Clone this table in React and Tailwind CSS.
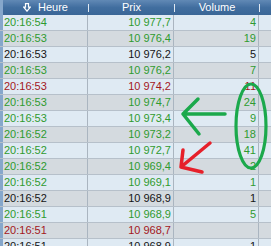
import React from 'react';

const rows = [
  { t: '20:16:54', p: '10 977,7', v: '4', c: 'g' },
  { t: '20:16:53', p: '10 976,4', v: '19', c: 'g' },
  { t: '20:16:53', p: '10 976,2', v: '5', c: 'k' },
  { t: '20:16:53', p: '10 976,2', v: '7', c: 'g' },
  { t: '20:16:53', p: '10 974,2', v: '11', c: 'r' },
  { t: '20:16:53', p: '10 974,7', v: '24', c: 'g' },
  { t: '20:16:53', p: '10 973,4', v: '9', c: 'g' },
  { t: '20:16:52', p: '10 973,2', v: '18', c: 'g' },
  { t: '20:16:52', p: '10 972,7', v: '41', c: 'g' },
  { t: '20:16:52', p: '10 969,4', v: '2', c: 'g' },
  { t: '20:16:52', p: '10 969,1', v: '1', c: 'g' },
  { t: '20:16:52', p: '10 968,9', v: '1', c: 'k' },
  { t: '20:16:51', p: '10 968,9', v: '5', c: 'g' },
  { t: '20:16:51', p: '10 968,7', v: '', c: 'r' },
  { t: '20:16:51', p: '10 968,9', v: '1', c: 'k' },
];

const colors = {
  g: 'text-[#2f9a2f]',
  r: 'text-[#a3171c]',
  k: 'text-[#151515]',
};

const Sep = () => <span className="w-px h-[8px] bg-[#dfe8f2]" />;

const App = () => {
  return (
    <div
      className="relative w-[271px] h-[246px] overflow-hidden bg-[#dde8f1] text-[11px] leading-none"
      style={{ fontFamily: '"Liberation Sans", Arial, sans-serif' }}
    >
      {/* Header */}
      <div className="flex h-[15px] bg-gradient-to-b from-[#6189b5] via-[#416e9f] to-[#3a6696] text-white">
        <div className="w-[3px] bg-[#86a7cb]" />
        <div className="w-[85px] flex items-center justify-center gap-[7px]">
          <svg width="8" height="9" viewBox="0 0 8 9" fill="none" stroke="white" strokeWidth="1.2">
            <path d="M2.5 0.6 H5.5 V4.2 H7.3 L4 8.2 L0.7 4.2 H2.5 Z" />
          </svg>
          <span>Heure</span>
        </div>
        <div className="flex items-center"><Sep /></div>
        <div className="w-[85px] flex items-center justify-center">Prix</div>
        <div className="flex items-center"><Sep /></div>
        <div className="w-[84px] flex items-center justify-center">Volume</div>
        <div className="flex items-center"><Sep /></div>
        <div className="flex-1" />
      </div>

      {/* Rows */}
      {rows.map((r, i) => (
        <div
          key={i}
          className={`flex h-[16px] border-b border-[#b6c0ca] ${
            i % 2 === 0 ? 'bg-[#dfeaf3]' : 'bg-[#d4dadf]'
          } ${colors[r.c]}`}
        >
          <div className="w-[3px] bg-[#86a7cb]" />
          <div className="w-[85px] flex items-center pl-[1px] border-r border-[#aab5c0]">{r.t}</div>
          <div className="w-[86px] flex items-center justify-end pr-[2px] border-r border-[#aab5c0]">{r.p}</div>
          <div className="w-[85px] flex items-center justify-end pr-[2px] border-r border-[#aab5c0]">{r.v}</div>
          <div className="flex-1" />
        </div>
      ))}

      {/* Annotations */}
      <svg
        className="absolute inset-0 pointer-events-none"
        width="271"
        height="246"
        viewBox="0 0 271 246"
        fill="none"
        strokeLinecap="round"
        strokeLinejoin="round"
      >
        <ellipse cx="251" cy="126" rx="15" ry="42" stroke="#1ba94c" strokeWidth="3.2" />
        <path d="M225 114 H183 M183 114 L198 99 M183 114 L199 134" stroke="#1ba94c" strokeWidth="3.5" />
        <path d="M210 143 L181 167 M181 167 L183 150 M181 167 L202 172" stroke="#e6202a" strokeWidth="3.5" />
      </svg>
    </div>
  );
};

export default App;
